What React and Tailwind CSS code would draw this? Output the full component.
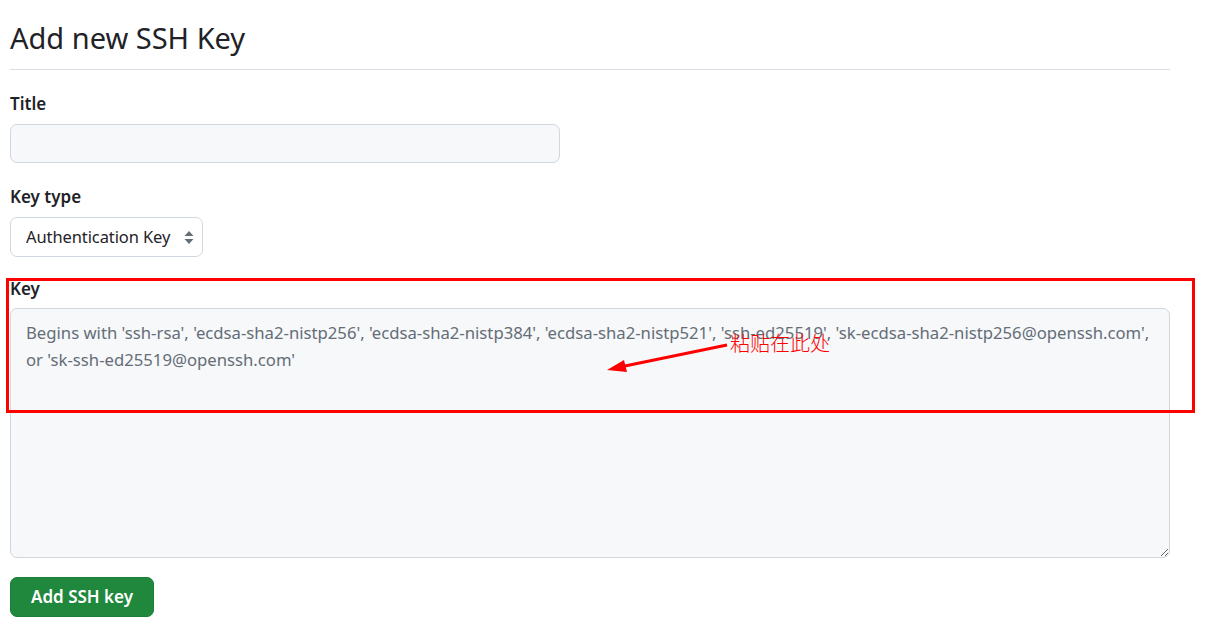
import React from 'react';

const font = { fontFamily: '"Noto Sans", "Open Sans", sans-serif' };

export default function App() {
  return (
    <div className="relative min-h-[639px] bg-white text-[#1f2328]" style={font}>
      <div className="w-[1160px] ml-[10px] pt-[18px]">
        <h2 className="text-[29px] leading-[40px] font-normal pb-[11px] border-b border-[#d8dee4]">
          Add new SSH Key
        </h2>

        <form className="flex flex-col">
          <label className="mt-[22px] text-[17px] leading-[24px] font-semibold">Title</label>
          <input
            type="text"
            className="mt-[8px] w-[550px] h-[39px] rounded-[7px] border border-[#d0d7de] bg-[#f6f8fa] px-[14px] text-[17px] outline-none"
          />

          <label className="mt-[22px] text-[17px] leading-[24px] font-semibold">Key type</label>
          <div className="relative mt-[8px] w-[193px]">
            <select className="appearance-none w-full h-[40px] rounded-[7px] border border-[#d0d7de] bg-white pl-[15px] pr-[20px] text-[16.5px] tracking-[-0.1px] text-[#1f2328] outline-none">
              <option>Authentication Key</option>
            </select>
            <svg className="absolute right-[9px] top-[14px] pointer-events-none" width="10" height="13" viewBox="0 0 10 13">
              <path d="M5 0 L9.5 5 L0.5 5 Z M5 13 L0.5 8 L9.5 8 Z" fill="#656d76" />
            </svg>
          </div>

          <label className="mt-[20px] text-[17px] leading-[24px] font-semibold">Key</label>
          <textarea
            className="mt-[7px] w-[1160px] h-[250px] rounded-[7px] border border-[#d0d7de] bg-[#f6f8fa] pl-[15px] pr-[10px] py-[10px] text-[16.7px] leading-[27px] placeholder-[#656d76] outline-none resize-y"
            placeholder="Begins with 'ssh-rsa', 'ecdsa-sha2-nistp256', 'ecdsa-sha2-nistp384', 'ecdsa-sha2-nistp521', 'ssh-ed25519', 'sk-ecdsa-sha2-nistp256@openssh.com', or 'sk-ssh-ed25519@openssh.com'"
          />

          <div className="mt-[19px]">
            <button
              type="button"
              className="h-[40px] px-[20px] rounded-[7px] bg-[#1f883d] border border-[#1a7f37] text-white text-[17px] font-semibold"
            >
              Add SSH key
            </button>
          </div>
        </form>
      </div>

      {/* annotation overlay */}
      <div className="absolute left-[6px] top-[278px] w-[1189px] h-[135px] border-[3px] border-[#ff0000] pointer-events-none" />
      <svg className="absolute left-0 top-0 pointer-events-none" width="1228" height="639">
        <line x1="727" y1="345" x2="620" y2="367" stroke="#ff0000" strokeWidth="3" />
        <path d="M607 370 L624 360 L627 372 Z" fill="#ff0000" />
      </svg>
      <div
        className="absolute left-[730px] top-[329px] text-[20px] leading-[28px] font-light text-[#ff0000]"
        style={{ fontFamily: '"Noto Sans CJK SC", sans-serif' }}
      >
        粘贴在此处
      </div>
    </div>
  );
}
